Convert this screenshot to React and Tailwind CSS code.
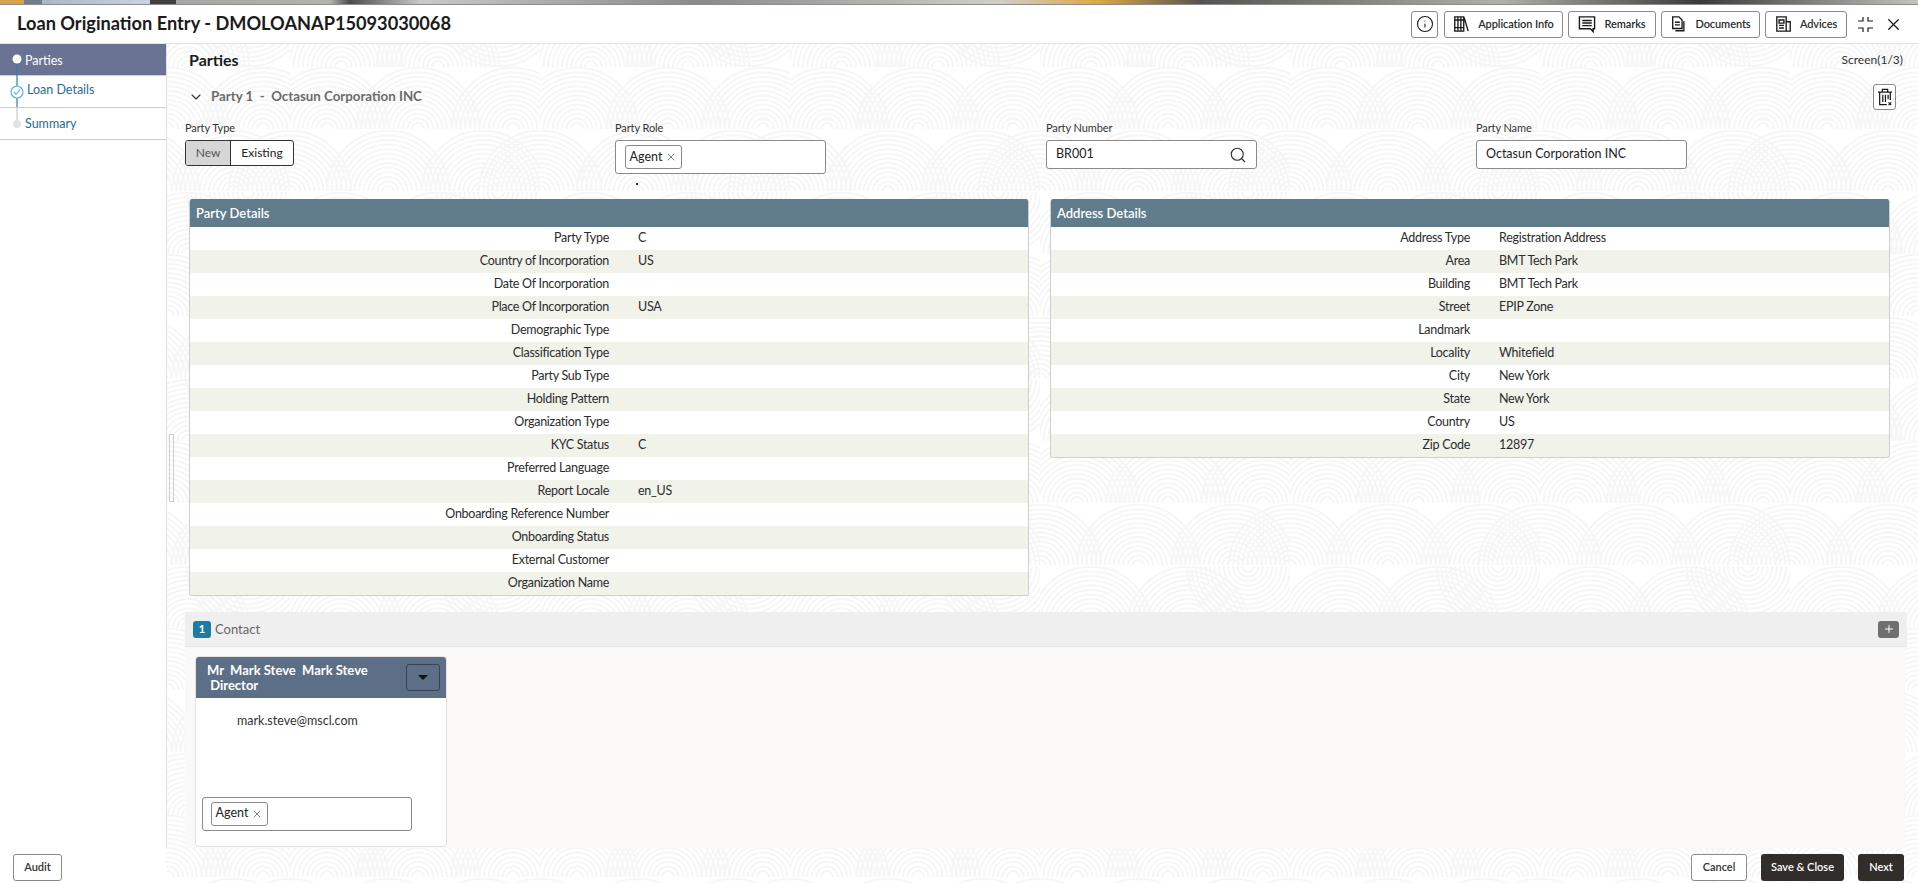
import { Search, X, Info, ChevronDown, Plus } from "lucide-react"

const partyRows = [
    ["Party Type", "C"],
    ["Country of Incorporation", "US"],
    ["Date Of Incorporation", ""],
    ["Place Of Incorporation", "USA"],
    ["Demographic Type", ""],
    ["Classification Type", ""],
    ["Party Sub Type", ""],
    ["Holding Pattern", ""],
    ["Organization Type", ""],
    ["KYC Status", "C"],
    ["Preferred Language", ""],
    ["Report Locale", "en_US"],
    ["Onboarding Reference Number", ""],
    ["Onboarding Status", ""],
    ["External Customer", ""],
    ["Organization Name", ""],
]

const addressRows = [
    ["Address Type", "Registration Address"],
    ["Area", "BMT Tech Park"],
    ["Building", "BMT Tech Park"],
    ["Street", "EPIP Zone"],
    ["Landmark", ""],
    ["Locality", "Whitefield"],
    ["City", "New York"],
    ["State", "New York"],
    ["Country", "US"],
    ["Zip Code", "12897"],
]

// arcs of the page's watermark, one list per band of the tile
const bands = [
    { y: 0, circles: [[128, 62], [37, 62], [223, 62]] },
    { y: 62, circles: [[98, 125], [193, 125], [0, 125], [250, 125]] },
    { y: 125, circles: [[51, 187], [148, 187], [208, 125]] },
]
const radii = [6, 10.6, 15.2, 19.8, 24.4, 29, 33.6, 38.2, 42.8, 47.4, 52, 56.6, 61.2]

function Watermark() {
    return (
        <svg className="absolute inset-0 w-full h-full" aria-hidden="true">
            <defs>
                {bands.map((band) => (
                    <clipPath id={"band" + band.y} key={band.y}>
                        <rect x="0" y={band.y} width="250" height="62" />
                    </clipPath>
                ))}
                <pattern
                    id="arcs"
                    width="250"
                    height="187"
                    patternUnits="userSpaceOnUse"
                    patternTransform="translate(40 67)"
                >
                    {bands.map((band) => (
                        <g key={band.y} clipPath={"url(#band" + band.y + ")"} fill="none" stroke="#f6f6f6" strokeWidth="2">
                            {band.circles.map(([cx, cy]) =>
                                radii.map((r) => (
                                    <circle key={cx + "-" + r} cx={cx} cy={cy} r={r} />
                                ))
                            )}
                        </g>
                    ))}
                </pattern>
            </defs>
            <rect width="100%" height="100%" fill="url(#arcs)" />
        </svg>
    )
}

function BooksIcon() {
    return (
        <svg width="17" height="18" viewBox="0 0 19 19" fill="none" stroke="#1a1a1a" strokeWidth="1.5">
            <path d="M2 1.5h10v16H2zM5.5 1.5v16M8.8 1.5v16M2 5h10M2 13.5h10M12.5 2.5l4.5 15" />
        </svg>
    )
}

function RemarksIcon() {
    return (
        <svg width="18" height="18" viewBox="0 0 19 19" fill="none" stroke="#1a1a1a" strokeWidth="1.5">
            <path d="M1.5 2h16v12.5h-1.5v3l-3-3H1.5zM4.5 5.8h10M4.5 8.5h10M4.5 11.2h10" />
        </svg>
    )
}

function DocumentsIcon() {
    return (
        <svg width="17" height="18" viewBox="0 0 19 19" fill="none" stroke="#1a1a1a" strokeWidth="1.5">
            <path d="M3 1.5h7l3.5 3.5v9.5H3zM5.5 7.5h5.5M5.5 10.5h5.5M15.5 6.5v10.5H6" />
        </svg>
    )
}

function AdvicesIcon() {
    return (
        <svg width="17" height="18" viewBox="0 0 19 19" fill="none" stroke="#1a1a1a" strokeWidth="1.5">
            <path d="M2 1.5h10.5v16H2zM4.5 5h5.5v3.5H4.5zM4.5 11h5.5M4.5 14h5.5M12.5 7h4.5v10.5h-4.5" />
        </svg>
    )
}

function ExpandIcon() {
    return (
        <svg width="17" height="17" viewBox="0 0 17 17" fill="none" stroke="#1a1a1a" strokeWidth="1.2">
            <path d="M1 5h5V1M11 1v4h5M1 12h5v4M16 12h-5v4" />
        </svg>
    )
}

function TrashIcon() {
    return (
        <svg width="16" height="18" viewBox="0 0 18 20" fill="none" stroke="#1a1a1a" strokeWidth="1.4">
            <path d="M1 4.5h16M6 4.5V1.5h6v3M3 4.5v14h8M15 4.5v9M6.5 7.5v8M9.5 7.5v8M12.5 7.5v5" />
            <path d="M13 16l3 3M16 16l-3 3" strokeWidth="1.2" />
        </svg>
    )
}

function HeaderButton({ icon, label, width }) {
    return (
        <button className={"h-[27px] flex items-center justify-center gap-[8px] border border-[#8a8a8a] rounded-[3px] bg-white text-[11px] font-semibold tracking-[-0.1px] text-[#2c2c2c] " + width}>
            {icon}
            <span className="pt-[1px]">{label}</span>
        </button>
    )
}

function Chip() {
    return (
        <span className="h-[24px] w-[57px] flex items-center justify-center gap-[3px] border border-[#8a8a8a] rounded-[3px] text-[12.5px] text-[#222]">
            Agent
            <X size={12} color="#555" strokeWidth={1.5} />
        </span>
    )
}

function FieldLabel({ text }) {
    return <div className="h-[14px] mb-[6px] pt-[1px] flex items-center text-[11px] leading-none tracking-[-0.1px] text-[#333]">{text}</div>
}

function DetailsPanel({ title, rows }) {
    return (
        <div className="w-[840px] self-start border border-[#cfcfcf] border-t-0 rounded-[3px] overflow-hidden bg-white">
            <div className="h-[28px] pl-[6px] pt-[1px] flex items-center bg-[#607b8a] text-[13px] font-semibold text-white">
                {title}
            </div>
            {rows.map((row, i) => (
                <div key={row[0]} className={"h-[23px] pb-[1px] flex items-center text-[12.5px] tracking-[-0.28px] text-[#2c2c2c] " + (i % 2 === 1 ? "bg-[#f1f3eb]" : "")}>
                    <div className="w-[419px] text-right">{row[0]}</div>
                    <div className="pl-[29px]">{row[1]}</div>
                </div>
            ))}
        </div>
    )
}

export default function App() {
    return (
        <div className="relative h-[883px] w-full flex flex-col overflow-hidden bg-white font-['Lato',sans-serif]">

            <Watermark />

            <div className="relative h-[4px] bg-[linear-gradient(90deg,#d8a24a_0,#d8a24a_24px,#6d7f8e_24px,#6d7f8e_42px,#aab6c6_42px,#c9d3e2_150px,#42403f_150px,#42403f_176px,#a8a6a2_176px,#b5b3ae_330px,#4d4c4b_350px,#c9c9c7_420px,#8a8a88_700px,#d0cfc9_1000px,#e0a63e_1100px,#55534f_1200px,#b2b0ab_1500px,#3b3a38_1700px,#c4c2bd_1918px)]" />
            <div className="relative h-[1px] bg-[#8d8d8d]" />

            <header className="relative h-[39px] flex items-center justify-between bg-white border-b border-[#e3e3e3]">
                <h1 className="pl-[17px] text-[18.2px] font-bold text-[#1b1b1b]">
                    Loan Origination Entry - DMOLOANAP15093030068
                </h1>
                <div className="flex items-center pr-[15px]">
                    <button className="w-[27px] h-[27px] mr-[6px] flex items-center justify-center border border-[#8a8a8a] rounded-[3px] bg-white">
                        <Info size={18} color="#1a1a1a" strokeWidth={1.5} />
                    </button>
                    <div className="flex gap-[5px]">
                        <HeaderButton icon={<BooksIcon />} label="Application Info" width="w-[119px]" />
                        <HeaderButton icon={<RemarksIcon />} label="Remarks" width="w-[88px]" />
                        <HeaderButton icon={<DocumentsIcon />} label="Documents" width="w-[99px]" />
                        <HeaderButton icon={<AdvicesIcon />} label="Advices" width="w-[82px]" />
                    </div>
                    <div className="ml-[10px] mr-[10px]"><ExpandIcon /></div>
                    <X size={19} color="#1a1a1a" strokeWidth={1.6} />
                </div>
            </header>

            <div className="relative flex-1 flex min-h-0">

                <aside className="relative w-[167px] shrink-0 bg-white border-r border-[#dfe1e6] text-[12.5px]">
                    <div className="h-[32px] pl-[25px] pt-[4px] flex items-center bg-[#6b7395] border-b border-[#cfcfcf] text-white">Parties</div>
                    <div className="h-[32px] pl-[27px] pb-[2px] flex items-center border-b border-[#cfcfcf] text-[#1f6b9c]">Loan Details</div>
                    <div className="h-[32px] pl-[25px] pt-[2px] flex items-center border-b border-[#cfcfcf] text-[#1f6b9c]">Summary</div>
                    <svg className="absolute left-0 top-0" width="30" height="96" fill="none">
                        <path d="M17 15V42M17 54V63" stroke="#2f7fb5" strokeWidth="1.2" />
                        <path d="M17 63V76" stroke="#c9c9c9" strokeWidth="1.2" />
                        <circle cx="17" cy="15" r="4.5" fill="#fff" />
                        <circle cx="17" cy="48" r="6" stroke="#5aaede" strokeWidth="1.2" fill="#fff" />
                        <path d="M13.8 48l2.2 2.3 4.2-4.6" stroke="#5aaede" strokeWidth="1.1" />
                        <circle cx="17" cy="80" r="4" fill="#e3e3e3" />
                    </svg>
                </aside>

                <div className="w-[18px] shrink-0 relative">
                    <div className="absolute left-[2px] top-[390px] w-[5px] h-[68px] border border-[#cfcfcf]" />
                </div>

                <main className="flex-1 min-w-0 overflow-hidden pr-[10px]">

                    <div className="h-[32px] pr-[5px] flex items-center justify-between">
                        <h2 className="pl-[4px] text-[16px] font-bold text-[#1b1b1b]">Parties</h2>
                        <span className="text-[12px] text-[#333]">Screen(1/3)</span>
                    </div>

                    <div className="mt-[8px] h-[26px] pl-[3px] pr-[12px] flex items-center">
                        <ChevronDown size={16} color="#333" strokeWidth={1.6} />
                        <span className="ml-[7px] text-[13.3px] font-bold text-[#6b6b6b] whitespace-pre">Party 1  -  Octasun Corporation INC</span>
                        <button className="ml-auto w-[23px] h-[26px] flex items-center justify-center border border-[#8a8a8a] rounded-[3px] bg-white">
                            <TrashIcon />
                        </button>
                    </div>

                    <div className="mt-[10px] h-[79px] grid grid-cols-[430px_431px_430px_1fr]">
                        <div>
                            <FieldLabel text="Party Type" />
                            <div className="w-[109px] h-[26px] flex text-[12px] rounded-[3px] border border-[#333] overflow-hidden bg-white">
                                <span className="w-[45px] flex items-center justify-center bg-[#d6d6d6] text-[#555] border-r border-[#333]">New</span>
                                <span className="flex-1 flex items-center justify-center text-[#222]">Existing</span>
                            </div>
                        </div>
                        <div className="relative">
                            <FieldLabel text="Party Role" />
                            <div className="w-[211px] h-[34px] pl-[9px] flex items-center border border-[#8a8a8a] rounded-[3px] bg-white">
                                <Chip />
                            </div>
                            <span className="absolute left-[21px] top-[63px] w-[2px] h-[2px] bg-[#333]" />
                        </div>
                        <div>
                            <FieldLabel text="Party Number" />
                            <div className="w-[211px] h-[29px] px-[9px] flex items-center justify-between border border-[#8a8a8a] rounded-[3px] bg-white text-[12.5px] text-[#222]">
                                BR001
                                <Search size={18} color="#333" strokeWidth={1.5} />
                            </div>
                        </div>
                        <div>
                            <FieldLabel text="Party Name" />
                            <div className="w-[211px] h-[29px] px-[9px] flex items-center border border-[#8a8a8a] rounded-[3px] bg-white text-[12.5px] text-[#222]">
                                Octasun Corporation INC
                            </div>
                        </div>
                    </div>

                    <div className="h-[396px] pl-[4px] flex gap-[21px]">
                        <DetailsPanel title="Party Details" rows={partyRows} />
                        <DetailsPanel title="Address Details" rows={addressRows} />
                    </div>

                    <section className="mt-[17px] w-[1722px] h-[236px] flex flex-col">
                        <div className="h-[35px] shrink-0 pl-[8px] pr-[8px] flex items-center bg-[#efefef] border-b border-[#e3e3e3] rounded-t-[3px]">
                            <span className="w-[18px] h-[17px] flex items-center justify-center rounded-[3px] bg-[#1f7ba3] text-[11px] font-bold text-white">1</span>
                            <span className="ml-[4px] pt-[2px] text-[13px] text-[#666]">Contact</span>
                            <button className="ml-auto w-[21px] h-[17px] flex items-center justify-center rounded-[3px] bg-[#6f6f6f]">
                                <Plus size={12} color="#fff" />
                            </button>
                        </div>
                        <div className="flex-1 min-h-0 pl-[10px] pt-[9px] mr-[2px] bg-[#faf9f7]">
                            <div className="w-[252px] h-[191px] flex flex-col border border-[#e3e3e3] rounded-[4px] overflow-hidden bg-white">
                                <div className="h-[41px] shrink-0 pl-[11px] pr-[6px] flex items-center justify-between bg-[#5c6f87] text-[13px] font-bold leading-[15px] text-white">
                                    <div className="whitespace-pre">
                                        {"Mr  Mark Steve  Mark Steve"}
                                        <br />
                                        {" Director"}
                                    </div>
                                    <button className="w-[34px] h-[27px] flex items-center justify-center border border-[#3a4450] rounded-[3px]">
                                        <span className="w-0 h-0 border-x-[5px] border-x-transparent border-t-[5px] border-t-[#111]" />
                                    </button>
                                </div>
                                <div className="pl-[41px] pt-[14px] text-[12.5px] text-[#333]">mark.steve@mscl.com</div>
                                <div className="ml-[6px] mt-[66px] w-[210px] h-[34px] pl-[8px] flex items-center border border-[#8a8a8a] rounded-[3px] bg-white">
                                    <Chip />
                                </div>
                            </div>
                        </div>
                    </section>

                </main>
            </div>

            <footer className="relative h-[35px] shrink-0 pr-[14px] flex items-center justify-between text-[11px]">
                <div className="w-[166px] h-full pl-[13px] pt-[3px] flex items-center bg-white">
                    <button className="w-[49px] h-[27px] border border-[#8a8a8a] rounded-[3px] bg-white font-semibold text-[#333]">Audit</button>
                </div>
                <div className="pt-[3px] flex items-center gap-[14px]">
                    <button className="w-[56px] h-[27px] border border-[#8a8a8a] rounded-[3px] bg-white font-semibold text-[#333]">Cancel</button>
                    <button className="w-[83px] h-[27px] rounded-[3px] bg-[#312d2a] font-semibold text-white">Save &amp; Close</button>
                    <button className="w-[46px] h-[27px] rounded-[3px] bg-[#312d2a] font-semibold text-white">Next</button>
                </div>
            </footer>

        </div>
    )
}
